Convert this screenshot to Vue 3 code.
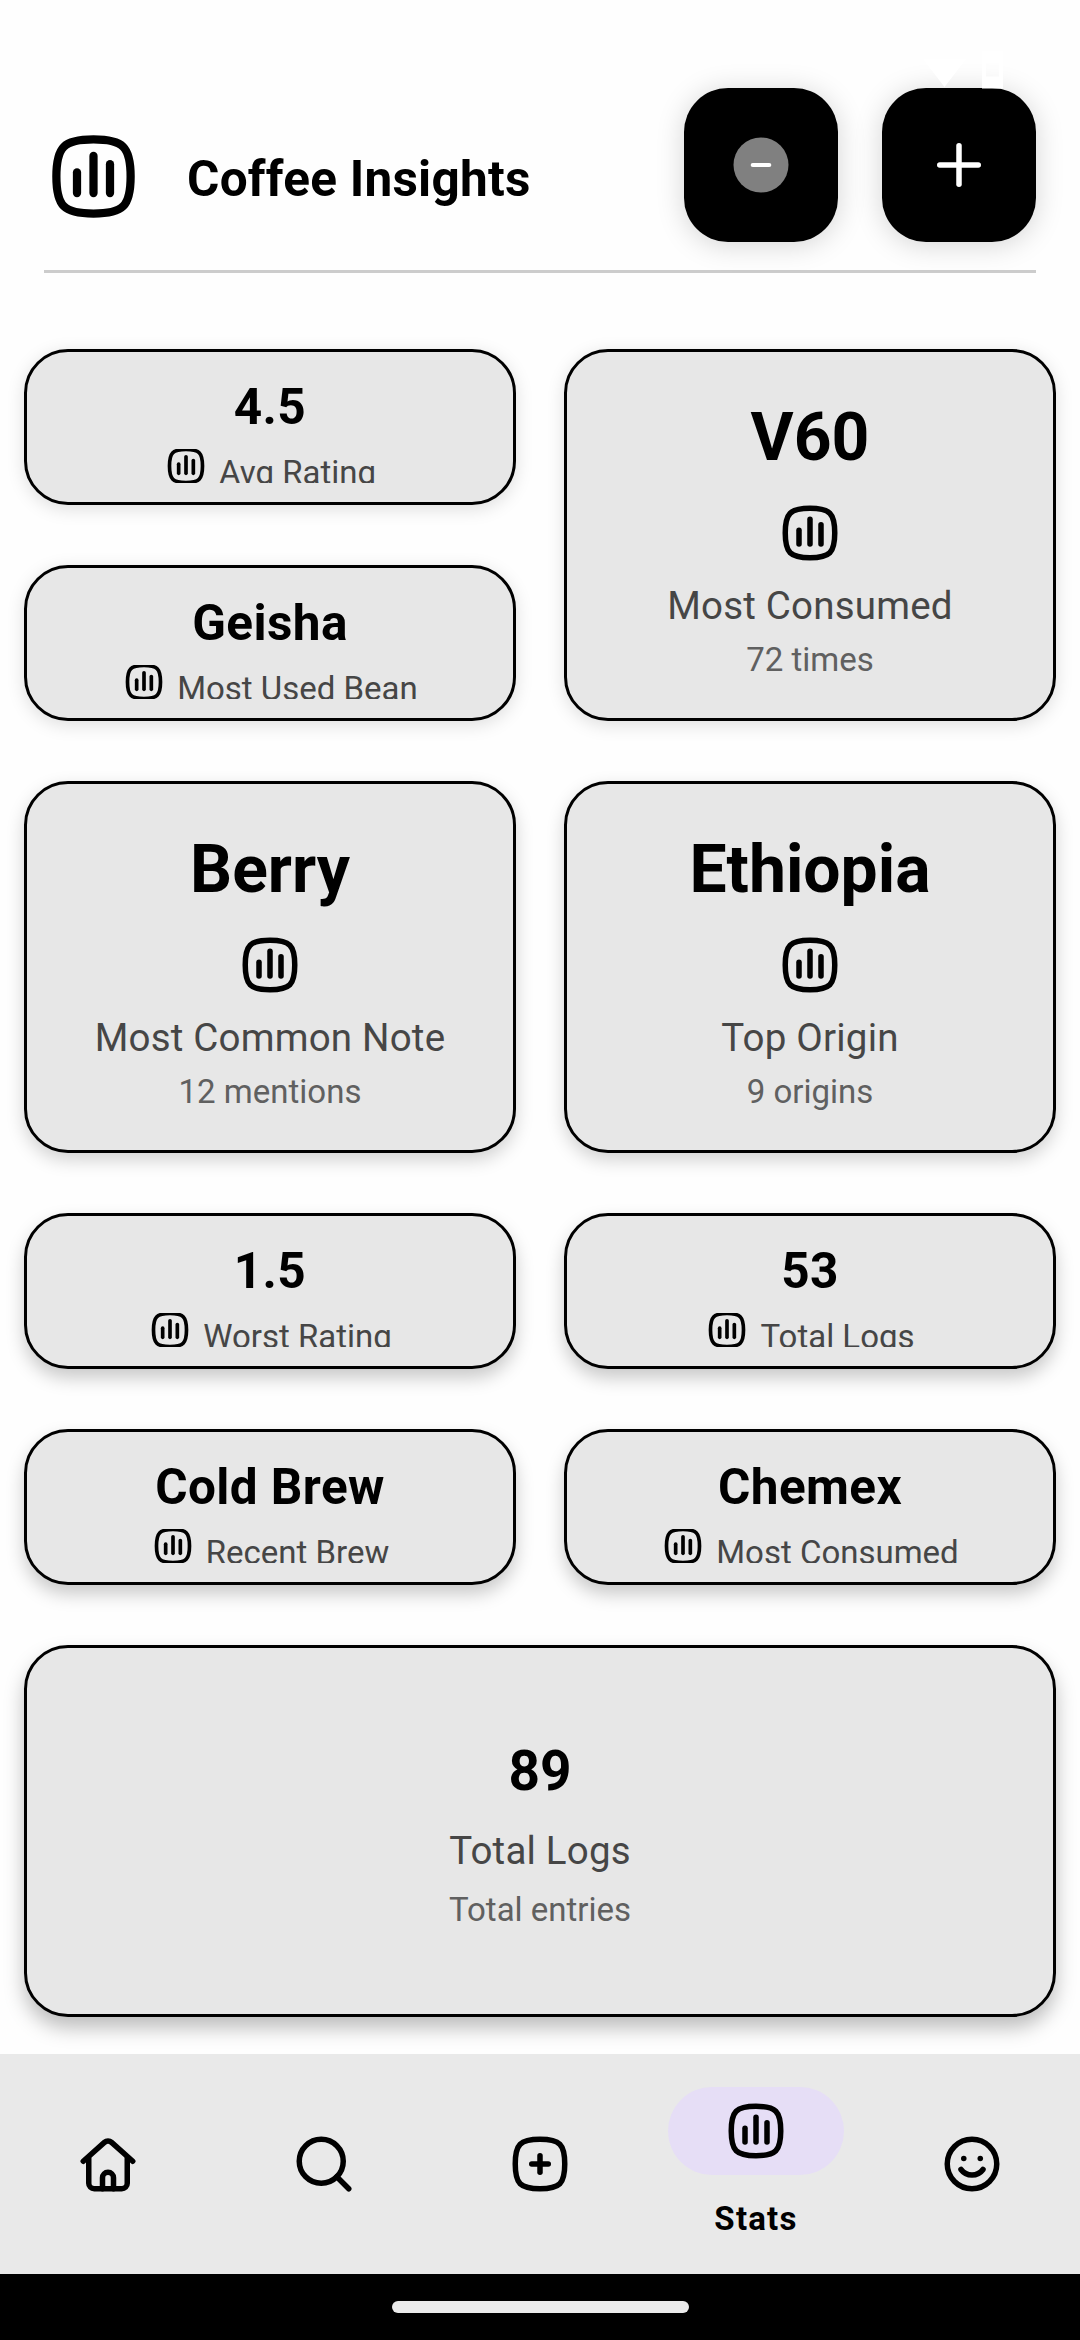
<script setup>
import { h } from 'vue'

const SQUIRCLE = 'M12 3c7.2 0 9 1.8 9 9s-1.8 9-9 9-9-1.8-9-9 1.8-9 9-9z'

const icons = {
  home: ['M5 10v9a2 2 0 0 0 2 2h10a2 2 0 0 0 2-2v-9', 'M3 11l7.7-6.85a1.95 1.95 0 0 1 2.6 0L21 11', 'M10 21v-4a2 2 0 0 1 4 0v4'],
  search: ['M3 11a8 8 0 1 0 16 0a8 8 0 1 0-16 0', 'M21 21l-4.35-4.35'],
  add: [SQUIRCLE, 'M9 12h6', 'M12 9v6'],
  stats: [SQUIRCLE, 'M8 11v5', 'M12 7v9', 'M16 9v7'],
  smile: ['M3 12a9 9 0 1 0 18 0a9 9 0 1 0-18 0', 'M9 10h.01', 'M15 10h.01', 'M8 14a5 5 0 0 0 8 0'],
  plus: ['M12 5v14', 'M5 12h14'],
}

const Icon = (props) =>
  h(
    'svg',
    {
      viewBox: '0 0 24 24',
      fill: 'none',
      stroke: 'currentColor',
      'stroke-width': 2,
      'stroke-linecap': 'round',
      'stroke-linejoin': 'round',
    },
    icons[props.name].map((d) => h('path', { d })),
  )
Icon.props = ['name']

const cards = [
  { size: 'small', depth: 'd1', value: '4.5', label: 'Avg Rating' },
  { size: 'large', depth: 'd1', value: 'V60', label: 'Most Consumed', note: '72 times' },
  { size: 'small', depth: 'd1', value: 'Geisha', label: 'Most Used Bean' },
  { size: 'large', depth: 'd2', value: 'Berry', label: 'Most Common Note', note: '12 mentions' },
  { size: 'large', depth: 'd2', value: 'Ethiopia', label: 'Top Origin', note: '9 origins' },
  { size: 'small', depth: 'd3', value: '1.5', label: 'Worst Rating' },
  { size: 'small', depth: 'd3', value: '53', label: 'Total Logs' },
  { size: 'small', depth: 'd3', value: 'Cold Brew', label: 'Recent Brew' },
  { size: 'small', depth: 'd3', value: 'Chemex', label: 'Most Consumed' },
  { size: 'wide', depth: 'd4', value: '89', label: 'Total Logs', note: 'Total entries' },
]

const tabs = [
  { icon: 'home' },
  { icon: 'search' },
  { icon: 'add' },
  { icon: 'stats', label: 'Stats' },
  { icon: 'smile' },
]
</script>

<template>
  <div class="screen">
    <header class="header">
      <Icon name="stats" class="logo" />
      <h1 class="title">Coffee Insights</h1>
      <button class="action" aria-label="Remove">
        <svg class="icon" viewBox="0 0 24 24" fill="none">
          <circle cx="12" cy="12" r="10" fill="#808080" />
          <path d="M9 12h6" stroke="#fff" stroke-width="1.5" stroke-linecap="round" />
        </svg>
      </button>
      <button class="action" aria-label="Add">
        <Icon name="plus" class="icon" />
      </button>
      <svg class="status" viewBox="0 0 80 50" fill="#fff">
        <path d="M-1 20h43L20.500 48z" />
        <path d="M58 12h21v37.500H58zM62 24v13.500h13V24z" fill-rule="evenodd" />
      </svg>
    </header>

    <main class="grid">
      <section v-for="(card, i) in cards" :key="i" class="card" :class="[card.size, card.depth]">
        <div class="value">{{ card.value }}</div>
        <div v-if="card.size === 'small'" class="row">
          <Icon name="stats" class="row-icon" />
          <span class="row-label">{{ card.label }}</span>
        </div>
        <template v-else>
          <Icon v-if="card.size === 'large'" name="stats" class="icon" />
          <div class="label">{{ card.label }}</div>
          <div class="note">{{ card.note }}</div>
        </template>
      </section>
    </main>

    <nav class="nav">
      <a v-for="tab in tabs" :key="tab.icon" class="tab" :class="{ active: tab.label }">
        <span class="indicator"><Icon :name="tab.icon" class="icon" /></span>
        <span v-if="tab.label" class="tab-label">{{ tab.label }}</span>
      </a>
    </nav>
    <footer class="system"><div class="handle"></div></footer>
  </div>
</template>

<style>
body {
  background: #fefefe;
}
</style>

<style scoped>
.screen {
  width: 1080px;
  height: 2340px;
  display: flex;
  flex-direction: column;
  overflow: hidden;
  background: #fefefe;
  color: #000;
  font-family: Roboto, sans-serif;
}

.header {
  position: relative;
  box-sizing: border-box;
  height: 273px;
  margin: 0 44px;
  padding-top: 88px;
  display: flex;
  align-items: flex-start;
  gap: 44px;
  border-bottom: 3px solid #ccc;
}
.logo {
  width: 99px;
  height: 99px;
  margin-top: 39px;
}
.title {
  flex: 1;
  margin: 58px 0 0;
  font-size: 49.5px;
  line-height: 66px;
  font-weight: 700;
  letter-spacing: 0.25px;
  white-space: nowrap;
}
.action {
  width: 154px;
  height: 154px;
  padding: 0;
  border: 0;
  border-radius: 44px;
  background: #000;
  color: #fff;
  display: flex;
  align-items: center;
  justify-content: center;
  box-shadow: 0 3px 28px rgba(0, 0, 0, 0.17);
}
.status {
  position: absolute;
  left: 880px;
  top: 39px;
  width: 80px;
  height: 50px;
}
.icon {
  display: block;
  flex: none;
  width: 66px;
  height: 66px;
}

.grid {
  display: grid;
  grid-template-columns: 492px 492px;
  grid-auto-rows: 156px;
  gap: 60px 48px;
  margin: 76px 24px 0;
  height: 1705px;
}
.card {
  box-sizing: border-box;
  border: 3px solid #000;
  border-radius: 44px;
  background: #e7e7e7;
  display: flex;
  flex-direction: column;
  align-items: center;
  white-space: nowrap;
}
.small {
  padding: 22px 0 19px;
}
.large {
  grid-row: span 2;
  padding-top: 42px;
}
.wide {
  grid-row: span 2;
  grid-column: span 2;
  padding-top: 85px;
}
.d1 {
  box-shadow: 0 4px 18px rgba(0, 0, 0, 0.13);
}
.d2 {
  box-shadow: 0 7px 18px rgba(0, 0, 0, 0.18);
}
.d3 {
  box-shadow: 0 9px 18px rgba(0, 0, 0, 0.21);
}
.d4 {
  box-shadow: 0 11px 20px rgba(0, 0, 0, 0.26);
}

.value {
  font-weight: 700;
}
.small .value {
  font-size: 49.5px;
  line-height: 66px;
  letter-spacing: 0.4px;
}
.large .value {
  font-size: 66px;
  line-height: 88px;
}
.wide .value {
  font-size: 55px;
  line-height: 76px;
}
.row {
  display: flex;
  align-items: flex-start;
  gap: 11px;
  height: 34px;
  margin-top: 9px;
  overflow: hidden;
}
.row-icon {
  flex: none;
  width: 44px;
  height: 44px;
  margin-top: -5px;
}
.row-label {
  margin-top: 2px;
  font-size: 33px;
  line-height: 44px;
  color: #464646;
}
.large .icon {
  margin-top: 18px;
}
.label {
  margin-top: 12px;
  font-size: 38.5px;
  line-height: 55px;
  letter-spacing: 0.2px;
  color: #464646;
}
.note {
  margin-top: 5px;
  font-size: 33px;
  line-height: 44px;
  color: #606060;
}
.wide .label {
  margin-top: 14px;
}
.wide .note {
  margin-top: 10px;
}

.nav {
  height: 220px;
  display: flex;
  background: #e9e9e9;
}
.tab {
  flex: 1;
  display: flex;
  flex-direction: column;
  align-items: center;
  justify-content: center;
}
.indicator {
  width: 176px;
  height: 88px;
  border-radius: 44px;
  display: flex;
  align-items: center;
  justify-content: center;
}
.active {
  justify-content: flex-start;
  padding-top: 33px;
}
.active .indicator {
  background: #e6def6;
}
.tab-label {
  margin-top: 22px;
  font-size: 33px;
  line-height: 44px;
  font-weight: 700;
  letter-spacing: 1.2px;
}

.system {
  height: 66px;
  display: flex;
  align-items: center;
  justify-content: center;
  background: #000;
}
.handle {
  width: 297px;
  height: 12px;
  border-radius: 6px;
  background: #ebebeb;
}
</style>
